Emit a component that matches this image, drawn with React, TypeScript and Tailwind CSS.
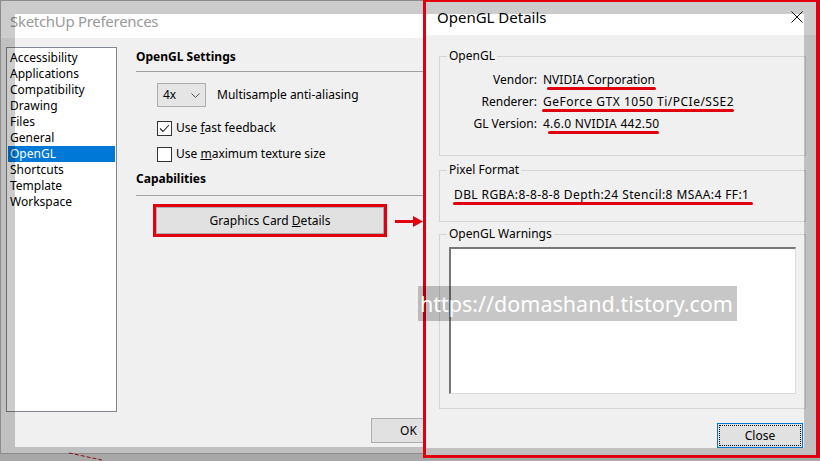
import React from 'react';

const RED = 'bg-[#e0000f]';

const prefsItems = [
    'Accessibility',
    'Applications',
    'Compatibility',
    'Drawing',
    'Files',
    'General',
    'OpenGL',
    'Shortcuts',
    'Template',
    'Workspace',
];

function Marked({ children, left = 0, right = 0 }: { children: React.ReactNode; left?: number; right?: number }) {
    // red hand-drawn underline from the blog annotation
    return (
        <span className="relative">
            {children}
            <span
                className={`absolute top-[16px] h-[3px] rounded-full ${RED}`}
                style={{ left, right }}
            />
        </span>
    );
}

function Checkbox({ checked }: { checked?: boolean }) {
    return (
        <span className="flex h-[15px] w-[15px] items-center justify-center border border-[#333] bg-white">
            {checked && (
                <svg width="11" height="9" viewBox="0 0 11 9" fill="none">
                    <path d="M1 4.5 L4 7.5 L10 1" stroke="#222" strokeWidth="1.1" />
                </svg>
            )}
        </span>
    );
}

function PrefsWindow() {
    return (
        <div className="absolute left-0 top-0 flex h-[454px] w-[470px] flex-col border-l border-t border-b border-[#8c8c8c] bg-[#f0f0f0]">
            <div className="h-[37px] bg-white pl-[9px] pt-[10px] text-[15px] leading-[20px] tracking-[-0.3px] text-[#9a9a9a]">
                SketchUp Preferences
            </div>

            <div className="flex pl-[5px] pt-[9px]">
                <ul className="h-[365px] w-[111px] border border-[#828790] bg-white pb-[1px] pt-[2px]">
                    {prefsItems.map((item) => (
                        <li
                            key={item}
                            className={`mx-[1px] h-[16px] pl-[2px] leading-[16px] ${
                                item === 'OpenGL' ? 'bg-[#0078d7] text-white' : ''
                            }`}
                        >
                            {item}
                        </li>
                    ))}
                </ul>

                <div className="ml-[19px] flex flex-1 flex-col pt-[2px]">
                    <div className="h-[16px] font-bold leading-[16px]">OpenGL Settings</div>
                    <div className="mt-[6px] h-px bg-[#a0a0a0]" />

                    <div className="ml-[21px] mt-[11px] flex items-center gap-[11px]">
                        <div className="flex h-[24px] w-[49px] items-center justify-between border border-[#adadad] bg-[#e5e5e5] pl-[5px] pr-[5px]">
                            <span>4x</span>
                            <svg width="9" height="5" viewBox="0 0 9 5" fill="none">
                                <path d="M0.5 0.5 L4.5 4.5 L8.5 0.5" stroke="#555" strokeWidth="1" />
                            </svg>
                        </div>
                        <span>Multisample anti-aliasing</span>
                    </div>

                    <label className="ml-[21px] mt-[13px] flex h-[16px] items-center gap-[4px]">
                        <Checkbox checked />
                        <span>
                            Use <u>f</u>ast feedback
                        </span>
                    </label>
                    <label className="ml-[21px] mt-[10px] flex h-[16px] items-center gap-[4px]">
                        <Checkbox />
                        <span>
                            Use <u>m</u>aximum texture size
                        </span>
                    </label>

                    <div className="mt-[9px] h-[16px] font-bold leading-[16px]">Capabilities</div>
                    <div className="mt-[8px] h-px bg-[#a0a0a0]" />

                    <div className="ml-[17px] mt-[8px] flex items-center">
                        <div className="h-[33px] w-[234px] border-[3px] border-[#e0000f]">
                            <button className="h-full w-full border border-[#adadad] bg-[#e1e1e1]">
                                Graphics Card <u>D</u>etails
                            </button>
                        </div>
                    </div>
                </div>
            </div>

            <div className="ml-[370px] mt-[6px] flex h-[25px] w-[75px] items-center justify-center border border-[#adadad] bg-[#e1e1e1]">
                OK
            </div>

            {/* translucent shadow frame */}
            <div className="pointer-events-none absolute left-0 right-0 top-0 h-[13px] bg-black/[0.2]" />
            <div className="pointer-events-none absolute bottom-0 left-0 top-[13px] w-[14px] bg-black/[0.2]" />
            <div className="pointer-events-none absolute bottom-0 left-[14px] right-0 h-[6px] bg-black/[0.2]" />
        </div>
    );
}

function GroupBox({ title, className, children }: { title: string; className?: string; children: React.ReactNode }) {
    return (
        <fieldset className={`ml-[13px] w-[367px] border border-[#d5d5d5] ${className ?? ''}`}>
            <legend className="ml-[7px] px-[2px] leading-[16px]">{title}</legend>
            {children}
        </fieldset>
    );
}

function DetailsDialog() {
    return (
        <div className="absolute left-[423px] top-[-1px] flex h-[459px] w-[397px] flex-col border-[3px] border-r-[4px] border-[#e0000f] bg-[#f0f0f0]">
            <div className="relative flex h-[33px] items-start justify-between bg-white pl-[11px] pr-[13px] pt-[5px]">
                <span className="text-[15px] leading-[20px] text-black">OpenGL Details</span>
                <svg className="mt-[4px]" width="12" height="12" viewBox="0 0 12 12" fill="none">
                    <path d="M0.5 0.5 L11.5 11.5 M11.5 0.5 L0.5 11.5" stroke="#111" strokeWidth="1" />
                </svg>
            </div>

            <GroupBox title="OpenGL" className="mt-[13px] pb-[20px] pt-[5px]">
                <div className="grid grid-cols-[97px_1fr] gap-x-[6px]">
                    <span className="h-[22px] text-right leading-[22px]">Vendor:</span>
                    <span className="leading-[22px]">
                        <Marked left={4} right={-1}>NVIDIA Corporation</Marked>
                    </span>
                    <span className="h-[22px] text-right leading-[22px]">Renderer:</span>
                    <span className="leading-[22px] tracking-[0.5px]">
                        <Marked left={-1} right={0}>GeForce GTX 1050 Ti/PCIe/SSE2</Marked>
                    </span>
                    <span className="h-[22px] text-right leading-[22px]">GL Version:</span>
                    <span className="leading-[22px] tracking-[0.25px]">
                        <Marked left={5} right={0}>4.6.0 NVIDIA 442.50</Marked>
                    </span>
                </div>
            </GroupBox>

            <GroupBox title="Pixel Format" className="mt-[6px] pb-[15px] pt-[6px]">
                <div className="h-[22px] pl-[14px] leading-[22px] tracking-[0.4px]">
                    <Marked left={-1} right={-4}>DBL RGBA:8-8-8-8 Depth:24 Stencil:8 MSAA:4 FF:1</Marked>
                </div>
            </GroupBox>

            <GroupBox title="OpenGL Warnings" className="mt-[4px] pb-[14px] pt-[5px]">
                <div className="ml-[9px] h-[147px] w-[347px] border-b border-l-2 border-r border-t-2 border-b-[#dcdcdc] border-l-[#777] border-r-[#dcdcdc] border-t-[#777] bg-white" />
            </GroupBox>

            <div className="mt-[14px] flex justify-end pr-[13px]">
                <button className="flex h-[25px] w-[86px] items-center justify-center border border-[#0078d7] bg-[#e1e1e1] p-[1px]">
                    <span className="flex h-full w-full items-center justify-center border border-dotted border-black">
                        Close
                    </span>
                </button>
            </div>

            {/* translucent shadow frame */}
            <div className="pointer-events-none absolute left-0 right-[12px] top-0 h-[12px] bg-black/[0.2]" />
            <div className="pointer-events-none absolute bottom-0 right-0 top-0 w-[12px] bg-black/[0.2]" />
            <div className="pointer-events-none absolute bottom-0 left-0 right-[12px] h-[7px] bg-black/[0.2]" />
        </div>
    );
}

export default function App() {
    return (
        <div className="relative h-[461px] w-[820px] overflow-hidden bg-[#a8a8a8] font-['Noto_Sans','Liberation_Sans',sans-serif] text-[12px] text-black">
            <PrefsWindow />

            {/* canvas edge peeking under the window */}
            <svg className="absolute left-[68px] top-[452px]" width="40" height="9" viewBox="0 0 40 9">
                <path d="M1 1 L34 8" stroke="#8b1010" strokeWidth="1" strokeDasharray="4 2" />
            </svg>

            {/* annotation arrow */}
            <svg className="absolute left-[394px] top-[215px]" width="30" height="13" viewBox="0 0 30 13">
                <path d="M1 6.5 H20" stroke="#e0000f" strokeWidth="3" />
                <path d="M19 1 L29 6.5 L19 12 Z" fill="#e0000f" />
            </svg>

            <DetailsDialog />

            {/* blog watermark */}
            <div className="absolute left-[418px] top-[286px] flex h-[35px] w-[319px] items-center overflow-hidden whitespace-nowrap bg-black/[0.22] pl-[2px] text-[21.5px] leading-none text-white">
                https://domashand.tistory.com
            </div>
        </div>
    );
}
